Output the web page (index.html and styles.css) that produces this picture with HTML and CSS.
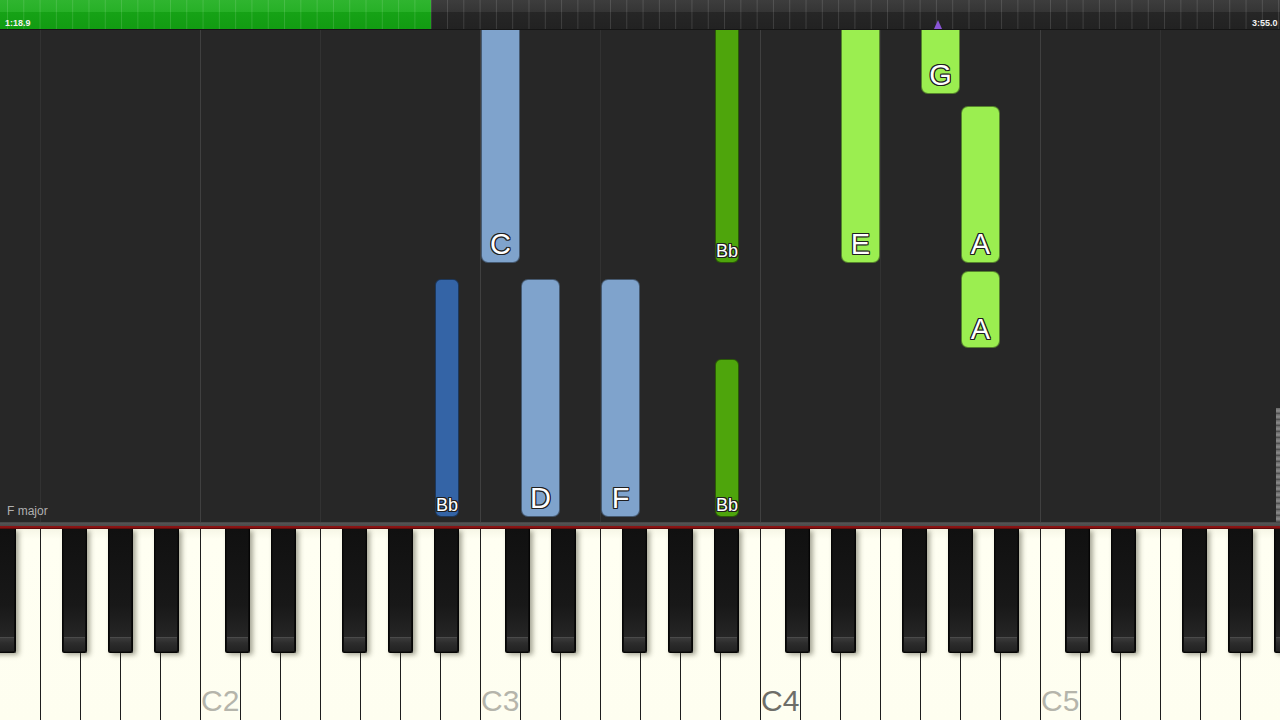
FILE: index.html
```html
<!DOCTYPE html>
<html>
<head>
<meta charset="utf-8">
<link rel="stylesheet" href="styles.css">
</head>
<body>
<div class="app">
  <div class="timeline">
    <div class="progress"></div>
    <div class="ticks"></div>
    <span class="time time-left">1:18.9</span>
    <span class="marker"></span>
    <span class="time time-right">3:55.0</span>
  </div>
  <div class="roll">
    <div class="note note-white blue" style="left:481px;top:-10px;height:243px"><span class="label">C</span></div>
    <div class="note note-black blue-dark" style="left:435px;top:249px;height:238px"><span class="label label-sm">Bb</span></div>
    <div class="note note-white blue" style="left:521px;top:249px;height:238px"><span class="label">D</span></div>
    <div class="note note-white blue" style="left:601px;top:249px;height:238px"><span class="label">F</span></div>
    <div class="note note-black green-dark" style="left:715px;top:-10px;height:243px"><span class="label label-sm">Bb</span></div>
    <div class="note note-black green-dark" style="left:715px;top:329px;height:158px"><span class="label label-sm">Bb</span></div>
    <div class="note note-white green" style="left:841px;top:-10px;height:243px"><span class="label">E</span></div>
    <div class="note note-white green" style="left:921px;top:-10px;height:74px"><span class="label">G</span></div>
    <div class="note note-white green" style="left:961px;top:76px;height:157px"><span class="label">A</span></div>
    <div class="note note-white green" style="left:961px;top:241px;height:77px"><span class="label">A</span></div>
    <span class="key-name">F major</span>
    <div class="edge-strip"></div>
  </div>
  <div class="keybed"></div>
  <div class="keyboard">
    <div class="whites">
      <div class="wkey"></div><div class="wkey"></div><div class="wkey"></div><div class="wkey"></div><div class="wkey"></div>
      <div class="wkey"><span class="oct">C2</span></div><div class="wkey"></div><div class="wkey"></div><div class="wkey"></div><div class="wkey"></div><div class="wkey"></div><div class="wkey"></div>
      <div class="wkey"><span class="oct">C3</span></div><div class="wkey"></div><div class="wkey"></div><div class="wkey"></div><div class="wkey"></div><div class="wkey"></div><div class="wkey"></div>
      <div class="wkey"><span class="oct oct-mid">C4</span></div><div class="wkey"></div><div class="wkey"></div><div class="wkey"></div><div class="wkey"></div><div class="wkey"></div><div class="wkey"></div>
      <div class="wkey"><span class="oct">C5</span></div><div class="wkey"></div><div class="wkey"></div><div class="wkey"></div><div class="wkey"></div><div class="wkey"></div><div class="wkey"></div>
    </div>
    <div class="bkey" style="left:-9px"></div>
    <div class="bkey" style="left:62px"></div>
    <div class="bkey" style="left:108px"></div>
    <div class="bkey" style="left:154px"></div>
    <div class="bkey" style="left:225px"></div>
    <div class="bkey" style="left:271px"></div>
    <div class="bkey" style="left:342px"></div>
    <div class="bkey" style="left:388px"></div>
    <div class="bkey" style="left:434px"></div>
    <div class="bkey" style="left:505px"></div>
    <div class="bkey" style="left:551px"></div>
    <div class="bkey" style="left:622px"></div>
    <div class="bkey" style="left:668px"></div>
    <div class="bkey" style="left:714px"></div>
    <div class="bkey" style="left:785px"></div>
    <div class="bkey" style="left:831px"></div>
    <div class="bkey" style="left:902px"></div>
    <div class="bkey" style="left:948px"></div>
    <div class="bkey" style="left:994px"></div>
    <div class="bkey" style="left:1065px"></div>
    <div class="bkey" style="left:1111px"></div>
    <div class="bkey" style="left:1182px"></div>
    <div class="bkey" style="left:1228px"></div>
    <div class="bkey" style="left:1274px"></div>
  </div>
</div>
</body>
</html>
```

FILE: styles.css
```css
* { box-sizing: border-box; }
html, body { margin: 0; padding: 0; background: #262626; }
body { font-family: "Liberation Sans", Arial, sans-serif; }

.app {
  width: 1280px;
  height: 720px;
  display: flex;
  flex-direction: column;
  overflow: hidden;
}

/* ---------- timeline ---------- */
.timeline {
  position: relative;
  height: 30px;
  flex: none;
  background: linear-gradient(#3d3d3d 0, #353535 40%, #262626 42%, #222 100%);
  border-bottom: 1px solid #151515;
  overflow: hidden;
}
.progress {
  width: 431px;
  height: 100%;
  background: linear-gradient(#2fb52f 0, #27b027 40%, #16a216 42%, #129c12 100%);
}
.ticks {
  position: absolute;
  inset: 0;
  background-image: linear-gradient(to right, rgba(255,255,255,0.13) 0, rgba(255,255,255,0.13) 1px, transparent 1px);
  background-size: 16.3px 100%;
  background-position: 7px 0;
}
.time {
  position: absolute;
  top: 18px;
  font-size: 9px;
  font-weight: bold;
  line-height: 10px;
  color: #f2f2f2;
}
.time-left { left: 5px; }
.time-right { left: 1252px; }
.marker {
  position: absolute;
  left: 934px;
  top: 20px;
  width: 0;
  height: 0;
  border-left: 4px solid transparent;
  border-right: 4px solid transparent;
  border-bottom: 9px solid #8a55d6;
}

/* ---------- piano roll ---------- */
.roll {
  position: relative;
  height: 492px;
  flex: none;
  background-color: #272727;
  background-image:
    linear-gradient(to right, #404040 0, #404040 1px, transparent 1px),
    linear-gradient(to right, #323232 0, #323232 1px, transparent 1px);
  background-size: 280px 100%, 280px 100%;
  background-position: 200px 0, 40px 0;
  background-repeat: repeat-x;
  overflow: hidden;
}
.note {
  position: absolute;
  display: flex;
  flex-direction: column;
  justify-content: flex-end;
  align-items: center;
  border-radius: 7px;
  border: 1px solid rgba(0,0,0,0.45);
}
.note-white { width: 39px; padding-bottom: 3px; }
.note-black { width: 24px; padding-bottom: 2px; border-radius: 6px; }
.blue { background: #7fa3cc; }
.blue-dark { background: #3464a6; }
.green { background: #9bee50; }
.green-dark { background: #4ea50c; }

.label {
  font-size: 29px;
  line-height: 1;
  color: #fff;
  text-shadow:
    -1px -1px 0 #1f1f1f, 1px -1px 0 #1f1f1f, -1px 1px 0 #1f1f1f, 1px 1px 0 #1f1f1f,
    0 -1px 0 #1f1f1f, 0 1px 0 #1f1f1f, -1px 0 0 #1f1f1f, 1px 0 0 #1f1f1f;
}
.label-sm { font-size: 18px; }

.key-name {
  position: absolute;
  left: 7px;
  bottom: 4px;
  font-size: 12px;
  color: #b0b0b0;
}
.edge-strip {
  position: absolute;
  right: 0;
  top: 378px;
  width: 4px;
  height: 114px;
  background: repeating-linear-gradient(#9b9b9b 0, #e0e0e0 3px, #5a5a5a 6px);
  opacity: 0.55;
}

/* ---------- keybed ---------- */
.keybed {
  height: 7px;
  flex: none;
  background: linear-gradient(#3c3c3c 0, #555 1px, #4a4a4a 4px, #7a1212 4px, #9a1717 5px, #4a0808 7px);
}

/* ---------- keyboard ---------- */
.keyboard {
  position: relative;
  flex: 1;
  overflow: hidden;
}
.whites {
  display: flex;
  height: 100%;
}
.wkey {
  width: 40px;
  flex: none;
  height: 100%;
  background: linear-gradient(#f6f6e6 0, #fffff2 10px, #fefef0 100%);
  border-left: 1px solid #1e1e1e;
  display: flex;
  flex-direction: column;
  justify-content: flex-end;
  padding-bottom: 4px;
}
.wkey:first-child { border-left: none; }
.oct {
  font-size: 30px;
  line-height: 1;
  color: #b5b5ab;
  padding-left: 0;
}
.oct-mid { color: #6e6e68; }

.bkey {
  position: absolute;
  top: 0;
  width: 25px;
  height: 124px;
  border: 1px solid #050505;
  border-top: none;
  border-radius: 0 0 2px 2px;
  background: linear-gradient(to right, #0b0b0b 0, #1a1a1a 15%, #141414 85%, #0b0b0b 100%);
  box-shadow: 3px 2px 5px rgba(60,60,40,0.45);
}
.bkey::before {
  content: "";
  position: absolute;
  left: 1px;
  right: 1px;
  top: 0;
  bottom: 14px;
  background: linear-gradient(#101010 0, #181818 70%, #262626 100%);
}
.bkey::after {
  content: "";
  position: absolute;
  left: 1px;
  right: 1px;
  bottom: 1px;
  height: 13px;
  border-top: 1px solid #4a4a4a;
  background: linear-gradient(#3a3a3a 0, #2c2c2c 40%, #222 100%);
}
```
